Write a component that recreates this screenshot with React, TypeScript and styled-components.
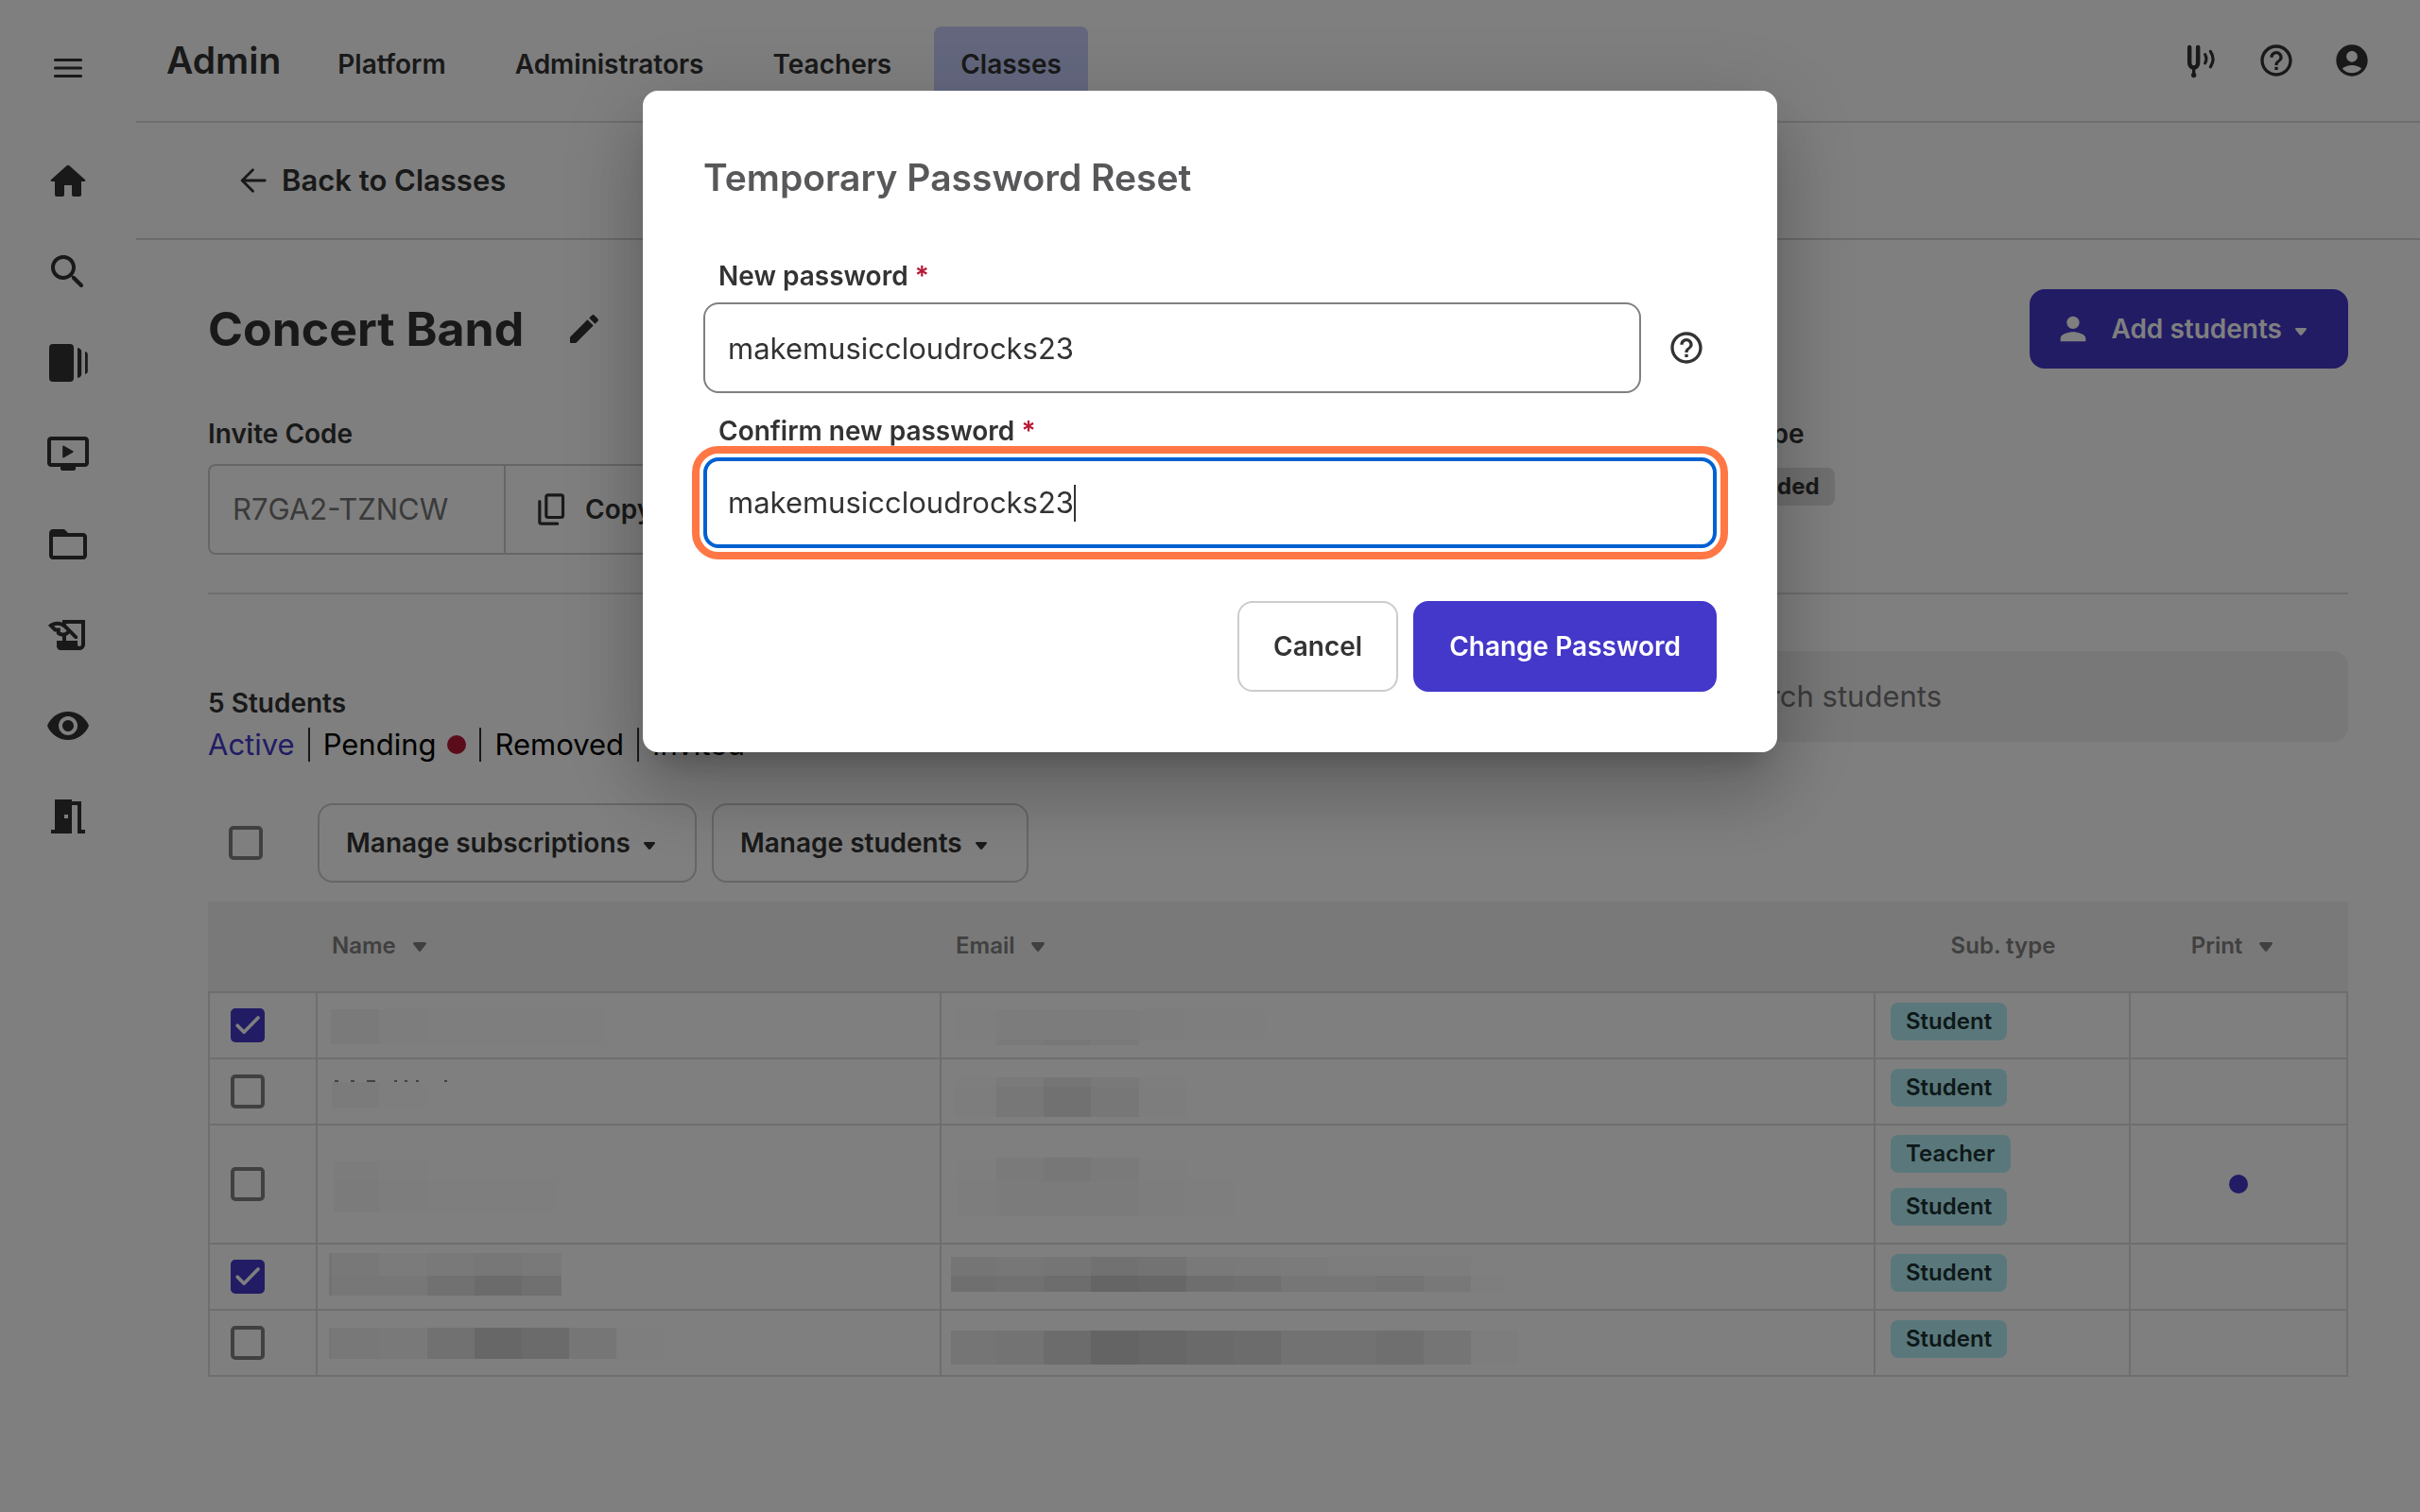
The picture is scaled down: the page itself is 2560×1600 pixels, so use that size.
import React, { useState } from "react";
import styled, { createGlobalStyle, css } from "styled-components";
import { MdFolderOpen, MdHelpOutline, MdHistoryEdu, MdMeetingRoom, MdPerson, MdVisibility } from "react-icons/md";

const color = {
  ink: "#333333",
  muted: "#808080",
  hint: "#757575",
  brand: "#4438ca",
  danger: "#b71836",
  line: "#dcdcdc",
  control: "#cccccc",
};

const text = {
  small: "24px",
  base: "28px",
  large: "31px",
  title: "39px",
  hero: "50px",
};

const GlobalStyle = createGlobalStyle`
  *, *::before, *::after { box-sizing: border-box; }
  body {
    margin: 0;
    background: #ffffff;
    color: ${color.ink};
    font-family: Inter, "Liberation Sans", sans-serif;
    font-size: ${text.base};
    line-height: 32px;
  }
  button, input { font: inherit; color: inherit; }
  button { cursor: pointer; }
  a { color: inherit; text-decoration: none; }
  h1, h2, p { margin: 0; }
`;

/* ---------- icons ---------- */

const Icon = styled.svg<{ $size?: number }>`
  display: block;
  flex: none;
  width: ${(p) => p.$size ?? 40}px;
  height: ${(p) => p.$size ?? 40}px;
  fill: currentColor;
`;

const line = { fill: "none", stroke: "currentColor", strokeLinecap: "round", strokeLinejoin: "round" } as const;

const MenuIcon = () => (
  <Icon viewBox="0 0 24 24">
    <path {...line} strokeWidth="1.9" d="M3.9 6.9h16.200M3.9 12h16.200M3.9 17.100h16.200" />
  </Icon>
);
const HomeIcon = () => (
  <Icon viewBox="0 0 24 24" $size={48}>
    <path d="M10 19v-5h4v5c0 .55.45 1 1 1h3c.55 0 1-.45 1-1v-7h1.7c.46 0 .68-.57.33-.87L12.67 3.6c-.38-.34-.96-.34-1.34 0l-8.36 7.53c-.34.3-.13.87.33.87H5v7c0 .55.45 1 1 1h3c.55 0 1-.45 1-1z" />
  </Icon>
);
const SearchIcon = ({ size = 48 }: { size?: number }) => (
  <Icon viewBox="0 0 24 24" $size={size}>
    <path d="M15.5 14h-.79l-.28-.27c1.2-1.4 1.82-3.31 1.48-5.34-.47-2.78-2.79-5-5.59-5.34-4.23-.52-7.79 3.04-7.27 7.27.34 2.8 2.56 5.12 5.34 5.59 2.03.34 3.94-.28 5.34-1.48l.27.28v.79l4.25 4.25c.41.41 1.08.41 1.49 0 .41-.41.41-1.08 0-1.49L15.5 14zm-6 0C7.01 14 5 11.99 5 9.5S7.01 5 9.5 5 14 7.01 14 9.5 11.99 14 9.5 14z" />
  </Icon>
);
const StackIcon = () => (
  <Icon viewBox="0 0 24 24" $size={48}>
    <rect x="2" y="2" width="13" height="20" rx="2" />
    <path d="M17 4c1.2.1 2.1 1 2.1 2v12c0 1-.9 1.9-2.1 2zM21 6c.9.2 1.4.8 1.4 1.5v9c0 .7-.5 1.3-1.4 1.5z" />
  </Icon>
);
const VideoIcon = () => (
  <Icon viewBox="0 0 24 24" $size={48}>
    <path d="M21 3H3c-1.1 0-2 .9-2 2v12c0 1.1.9 2 2 2h5v1c0 .55.45 1 1 1h6c.55 0 1-.45 1-1v-1h5c1.1 0 2-.9 2-2V5c0-1.1-.9-2-2-2zm0 14H3V5h18v12z" />
    <path {...line} fill="currentColor" strokeWidth="1" d="M9.6 8.3v5.4l4.7-2.7z" />
  </Icon>
);
const BackIcon = () => (
  <Icon viewBox="0 0 24 24">
    <path {...line} strokeWidth="1.7" d="M19.3 12H5M11.7 5.2L4.9 12l6.8 6.8" />
  </Icon>
);
const PencilIcon = () => (
  <Icon viewBox="0 0 24 24">
    <path d="M3 17.46v3.04c0 .28.22.5.5.5h3.04c.13 0 .26-.05.35-.15L17.81 9.94l-3.75-3.75L3.15 17.1c-.1.1-.15.22-.15.36zM20.71 7.04a.996.996 0 0 0 0-1.41l-2.34-2.34a.996.996 0 0 0-1.41 0l-1.83 1.83 3.75 3.75 1.83-1.83z" />
  </Icon>
);
const TuningForkIcon = () => (
  <Icon viewBox="0 0 24 24">
    <path {...line} strokeWidth="2.7" d="M4.9 3.6v9.600c0 2 1.100 3.300 2.700 3.300s2.700-1.300 2.700-3.300V3.600" />
    <path {...line} strokeWidth="2" d="M7.6 16.5v5" />
    <circle cx="7.6" cy="21.3" r="1.6" />
    <path {...line} strokeWidth="1.9" d="M14.8 8.2c1 1.8 1 3.700 0 5.500M18.200 6.200c2.100 3.200 2.100 6.700 0 9.900" />
  </Icon>
);
const AccountIcon = () => (
  <Icon viewBox="0 0 24 24">
    <path d="M12 2C6.48 2 2 6.48 2 12s4.48 10 10 10 10-4.48 10-10S17.52 2 12 2zm0 4c1.93 0 3.5 1.57 3.5 3.5S13.93 13 12 13s-3.5-1.57-3.5-3.5S10.07 6 12 6zm0 14c-2.03 0-4.43-.82-6.14-2.88C7.55 15.8 9.68 15 12 15s4.45.8 6.14 2.12C16.43 19.18 14.03 20 12 20z" />
  </Icon>
);
const CopyIcon = () => (
  <Icon viewBox="0 0 24 24">
    <rect {...line} strokeWidth="1.9" x="8.9" y="2.9" width="10.6" height="14.2" rx="1.2" />
    <path {...line} strokeWidth="1.9" d="M4.7 7v12.9c0 .7.5 1.2 1.2 1.2H16" />
  </Icon>
);

const CaretShape = styled.svg<{ $wide?: boolean }>`
  display: block;
  flex: none;
  width: ${(p) => (p.$wide ? 14 : 12)}px;
  height: ${(p) => (p.$wide ? 10 : 8)}px;
  margin-top: ${(p) => (p.$wide ? 2 : 6)}px;
  fill: currentColor;
`;
const Caret = ({ wide }: { wide?: boolean }) => (
  <CaretShape $wide={wide} viewBox="0 0 14 10" preserveAspectRatio="none" aria-hidden="true">
    <path d="M1.6 0h10.8c1.4 0 2 1.6 1.1 2.6L8.2 9.3c-.6.8-1.8.8-2.4 0L.5 2.6C-.4 1.6.2 0 1.6 0z" />
  </CaretShape>
);

/* ---------- shell ---------- */

const Shell = styled.div`
  display: flex;
  min-height: 100vh;
`;

const Sidebar = styled.nav`
  flex: none;
  width: 144px;
  padding-top: 48px;
  display: flex;
  flex-direction: column;
  align-items: center;
  gap: 48px;
`;

const IconButton = styled.button<{ $size?: number }>`
  flex: none;
  display: grid;
  place-items: center;
  width: ${(p) => p.$size ?? 48}px;
  height: ${(p) => p.$size ?? 48}px;
  padding: 0;
  border: 0;
  background: none;
`;

const MenuButton = styled(IconButton)`
  margin-bottom: 24px;
`;

const Main = styled.div`
  flex: 1;
  min-width: 0;
`;

const Header = styled.header`
  display: flex;
  align-items: baseline;
  gap: 32px;
  padding: 28px 52px 0 32px;
  border-bottom: 2px solid ${color.line};
`;

const Product = styled.h1`
  font-size: ${text.title};
  line-height: 48px;
  font-weight: 600;
`;

const Tabs = styled.nav`
  display: flex;
  gap: 17px;
`;

const Tab = styled.a<{ $active?: boolean }>`
  padding: 24px 28px 44px;
  border-radius: 8px 8px 0 0;
  font-weight: 600;
  background: ${(p) => (p.$active ? "#c8cffc" : "transparent")};
`;

const HeaderActions = styled.div`
  align-self: flex-start;
  display: flex;
  gap: 40px;
  margin-left: auto;
  padding-top: 16px;
`;

const BackBar = styled.div`
  display: flex;
  align-items: center;
  height: 124px;
  padding-left: 104px;
  border-bottom: 2px solid #d4d4d4;
`;

const BackLink = styled.a`
  display: flex;
  align-items: center;
  gap: 10px;
  font-size: ${text.large};
  line-height: 40px;
  font-weight: 600;
`;

const Content = styled.main`
  padding: 52px 76px;
`;

/* ---------- class details ---------- */

const TitleRow = styled.div`
  display: flex;
  align-items: center;
  gap: 44px;
`;

const ClassName = styled.h2`
  font-size: ${text.hero};
  line-height: 56px;
  font-weight: 700;
`;

const Button = styled.button<{ $primary?: boolean; $tall?: boolean }>`
  display: flex;
  align-items: center;
  gap: 14px;
  height: ${(p) => (p.$tall ? 96 : 84)}px;
  padding: ${(p) => (p.$tall ? "0 36px" : "0 42px 0 28px")};
  border: 2px solid ${(p) => (p.$primary ? color.brand : color.control)};
  border-radius: 16px;
  background: ${(p) => (p.$primary ? color.brand : "transparent")};
  color: ${(p) => (p.$primary ? "#ffffff" : color.ink)};
  font-weight: 600;
  white-space: nowrap;
`;

const AddButton = styled(Button)`
  margin-left: auto;
  padding-left: 24px;
`;

const AddLabel = styled.span`
  padding-left: 6px;
`;

const Details = styled.div`
  display: grid;
  grid-template-columns: minmax(0, 68fr) minmax(0, 32fr);
  margin-top: 53px;
  padding-bottom: 40px;
  border-bottom: 2px solid ${color.line};
`;

const Detail = styled.div`
  display: flex;
  flex-direction: column;
  align-items: flex-start;
  gap: 16px;
`;

const DetailLabel = styled.label`
  font-weight: 600;
`;

const CodeGroup = styled.div`
  display: flex;
  height: 96px;
  border: 2px solid ${color.control};
  border-radius: 8px;
`;

const CodeInput = styled.input`
  width: 313px;
  padding: 0 24px;
  border: 0;
  border-right: 2px solid ${color.control};
  background: none;
  color: ${color.hint};
  font-size: ${text.large};
`;

const CopyButton = styled.button`
  display: flex;
  align-items: center;
  gap: 16px;
  padding: 0 28px;
  border: 0;
  background: none;
  font-weight: 600;
`;

const Badge = styled.span<{ $tone?: "grey" }>`
  display: block;
  width: fit-content;
  padding: 4px 16px;
  border-radius: 8px;
  background: #b4f0f6;
  color: #1c3033;
  font-size: ${text.small};
  font-weight: 600;
  ${(p) =>
    p.$tone === "grey" &&
    css`
      margin-top: 4px;
      background: #e0e0e0;
      color: ${color.ink};
      font-weight: 700;
    `}
`;

/* ---------- students ---------- */

const ListHead = styled.div`
  display: flex;
  justify-content: space-between;
  margin-top: 60px;
`;

const Summary = styled.div`
  display: flex;
  flex-direction: column;
  gap: 8px;
  padding-top: 39px;
`;

const Count = styled.p`
  font-weight: 600;
`;

const Filters = styled.div`
  display: flex;
  align-items: center;
  font-size: ${text.large};
  line-height: 40px;
`;

const Filter = styled.a<{ $active?: boolean }>`
  display: flex;
  align-items: center;
  gap: 12px;
  padding: 0 14px;
  color: ${(p) => (p.$active ? color.brand : "#000000")};
  &:first-child {
    padding-left: 0;
  }
  & + & {
    border-left: 2px solid ${color.ink};
    line-height: 36px;
  }
`;

const Dot = styled.span<{ $danger?: boolean }>`
  display: block;
  width: 20px;
  height: 20px;
  border-radius: 50%;
  background: ${(p) => (p.$danger ? color.danger : color.brand)};
`;

const SearchBox = styled.label`
  display: flex;
  align-items: center;
  gap: 12px;
  width: 744px;
  height: 96px;
  padding: 0 24px;
  border-radius: 16px;
  background: #f0f0f0;
  color: ${color.hint};
`;

const SearchInput = styled.input`
  flex: 1;
  min-width: 0;
  padding: 0;
  border: 0;
  background: none;
  font-size: ${text.large};
  &::placeholder {
    color: ${color.hint};
    opacity: 1;
  }
`;

const Toolbar = styled.div`
  display: flex;
  align-items: center;
  gap: 16px;
  margin-top: 42px;
  padding-left: 22px;
`;

const CheckWrap = styled.span<{ $spaced?: boolean }>`
  display: grid;
  width: 36px;
  height: 36px;
  color: #ffffff;
  margin-right: ${(p) => (p.$spaced ? 42 : 0)}px;
  & > * {
    grid-area: 1 / 1;
  }
`;

const CheckBox = styled.input`
  appearance: none;
  width: 36px;
  height: 36px;
  margin: 0;
  border: 4px solid ${color.muted};
  border-radius: 5px;
  &:checked {
    border-color: ${color.brand};
    background: ${color.brand};
  }
  & + svg {
    visibility: hidden;
    pointer-events: none;
  }
  &:checked + svg {
    visibility: visible;
  }
`;

const Check = ({ label, initial = false, spaced }: { label: string; initial?: boolean; spaced?: boolean }) => {
  const [on, setOn] = useState(initial);
  return (
    <CheckWrap $spaced={spaced}>
      <CheckBox type="checkbox" aria-label={label} checked={on} onChange={() => setOn(!on)} />
      <Icon viewBox="0 0 36 36" $size={36} aria-hidden="true">
        <path {...line} strokeWidth="3.6" d="M7.2 18.2l6.9 7L29 10" />
      </Icon>
    </CheckWrap>
  );
};

const Table = styled.table`
  width: 100%;
  margin-top: 20px;
  table-layout: fixed;
  border-collapse: separate;
  border-spacing: 0;
`;

const HeadCell = styled.th<{ $width?: number; $center?: boolean }>`
  width: ${(p) => (p.$width ? `${p.$width}px` : "auto")};
  height: 97px;
  padding: 0 15px 2px;
  background: #f3f3f3;
  border-bottom: 2px solid ${color.line};
  color: ${color.muted};
  font-size: ${text.small};
  font-weight: 600;
  text-align: ${(p) => (p.$center ? "center" : "left")};
`;

const SortButton = styled.button`
  display: inline-flex;
  align-items: center;
  gap: 18px;
  padding: 0;
  border: 0;
  background: none;
  font-weight: 600;
`;

const CenterSort = styled(SortButton)`
  padding-right: 16px;
`;

const Cell = styled.td<{ $pad?: string; $top?: boolean }>`
  padding: ${(p) => p.$pad ?? "0"};
  border-right: 2px solid ${color.line};
  border-bottom: 2px solid ${color.line};
  vertical-align: ${(p) => (p.$top ? "top" : "middle")};
  &:first-child {
    border-left: 2px solid ${color.line};
  }
`;

const BadgeList = styled.div`
  display: flex;
  flex-direction: column;
  gap: 16px;
`;

const CenterDot = styled(Dot)`
  margin: 0 auto;
`;

const Mosaic = styled.svg`
  display: block;
  width: 100%;
  shape-rendering: crispEdges;
`;

/* One strip of a blurred-out value: top, height, left edge, then [right edge, darkness] pairs. */
type Strip = [number, number, number, [number, number][]];

const Redacted = ({ strips, height, ticks }: { strips: Strip[]; height: number; ticks?: [number, number][] }) => (
  <Mosaic height={height} aria-hidden="true">
    {strips.flatMap(([y, h, left, cells], s) =>
      cells.map(([right, shade], i) => {
        const x = i ? cells[i - 1][0] : left;
        return <rect key={`${s}-${i}`} x={x} y={y} width={right - x} height={h} fill="#000" fillOpacity={shade / 128} />;
      }),
    )}
    {ticks?.map(([x, w]) => <rect key={x} x={x} y={22} width={w} height={2} fill={color.ink} fillOpacity={0.6} />)}
  </Mosaic>
);

type Student = {
  checked?: boolean;
  name: Strip[];
  email: Strip[];
  ticks?: [number, number][];
  types: string[];
  print?: boolean;
};

const students: Student[] = [
  {
    checked: true,
    name: [[17, 37, 14, [[65, 5], [116, 2], [304, 1]]]],
    email: [
      [17, 32, 15, [[58, 1], [209, 3], [258, 2], [343, 1]]],
      [49, 6, 58, [[108, 5], [158, 8], [209, 5]]],
    ],
    types: ["Student"],
  },
  {
    name: [[24, 28, 15, [[65, 4], [116, 1]]]],
    ticks: [[18, 4], [35, 4], [52, 9], [81, 3], [92, 3], [104, 3], [134, 3]],
    email: [
      [19, 10, 13, [[58, 1], [108, 5], [158, 10], [209, 6], [259, 1]]],
      [29, 32, 13, [[58, 2], [108, 8], [158, 14], [209, 8], [259, 2]]],
    ],
    types: ["Student"],
  },
  {
    name: [
      [38, 20, 17, [[65, 3], [116, 1]]],
      [58, 33, 17, [[65, 4], [116, 2], [254, 1]]],
    ],
    email: [
      [34, 25, 17, [[58, 1], [108, 5], [158, 8], [209, 5], [259, 1]]],
      [59, 37, 17, [[58, 2], [209, 4], [258, 2], [309, 1]]],
    ],
    types: ["Teacher", "Student"],
    print: true,
  },
  {
    checked: true,
    name: [
      [9, 24, 12, [[15, 12], [65, 7], [116, 4], [166, 6], [216, 8], [258, 6]]],
      [33, 21, 12, [[15, 13], [116, 8], [166, 14], [216, 20], [258, 15]]],
    ],
    email: [
      [13, 20, 10, [[58, 10], [108, 8], [158, 10], [209, 14], [259, 12], [309, 6], [359, 5], [409, 4], [560, 2]]],
      [33, 17, 10, [[58, 16], [108, 14], [158, 18], [209, 26], [259, 24], [309, 17], [359, 15], [460, 9], [510, 11], [560, 7], [595, 1]]],
    ],
    types: ["Student"],
  },
  {
    name: [[18, 33, 12, [[15, 9], [65, 7], [116, 6], [166, 14], [216, 24], [266, 20], [316, 9], [366, 1]]]],
    email: [
      [21, 36, 10, [[58, 10], [108, 12], [158, 19], [209, 27], [259, 24], [309, 21], [359, 19], [460, 13], [510, 16], [560, 10], [610, 2]]],
    ],
    types: ["Student"],
  },
];

/* ---------- dialog ---------- */

const Scrim = styled.div`
  position: fixed;
  inset: 0;
  display: flex;
  justify-content: center;
  align-items: flex-start;
  padding: 96px 32px;
  background: rgba(0, 0, 0, 0.5);
`;

const Dialog = styled.form`
  display: flex;
  flex-direction: column;
  width: 100%;
  max-width: 1200px;
  padding: 64px;
  border-radius: 16px;
  background: #ffffff;
  box-shadow:
    0 22px 30px -14px rgba(0, 0, 0, 0.2),
    0 48px 76px 6px rgba(0, 0, 0, 0.14),
    0 18px 92px 16px rgba(0, 0, 0, 0.12);
`;

const DialogTitle = styled.h2`
  margin-bottom: 60px;
  color: #58585b;
  font-size: ${text.title};
  line-height: 56px;
  font-weight: 600;
`;

const Field = styled.div`
  display: flex;
  flex-direction: column;
  gap: 12px;
  margin-bottom: 24px;
`;

const FieldLabel = styled.label`
  padding-left: 16px;
  font-weight: 600;
`;

const Required = styled.span`
  color: ${color.danger};
`;

const FieldRow = styled.div`
  display: flex;
  align-items: center;
  gap: 16px;
`;

const inputFrame = css`
  flex: 1;
  min-width: 0;
  height: 96px;
  border-radius: 16px;
  background: #ffffff;
  font-size: ${text.large};
`;

const PasswordInput = styled.input`
  ${inputFrame}
  padding: 0 24px;
  border: 2px solid #808080;
`;

const FocusedFrame = styled.div`
  ${inputFrame}
  display: flex;
  align-items: center;
  padding: 0 22px;
  border: 4px solid #0060d2;
  outline: 8px solid #ff7744;
  outline-offset: 4px;
`;

const GrowingInput = styled.input`
  field-sizing: content;
  max-width: 100%;
  padding: 0;
  border: 0;
  outline: 0;
  background: none;
  caret-color: transparent;
`;

const TextCursor = styled.span`
  width: 2px;
  height: 39px;
  background: ${color.ink};
`;

const DialogActions = styled.div`
  display: flex;
  justify-content: flex-end;
  gap: 16px;
  margin-top: 32px;
`;

export default function App() {
  const [password, setPassword] = useState("makemusiccloudrocks23");
  const [confirm, setConfirm] = useState("makemusiccloudrocks23");

  return (
    <>
      <GlobalStyle />
      <Shell>
        <Sidebar aria-label="Main">
          <MenuButton type="button" aria-label="Menu"><MenuIcon /></MenuButton>
          <IconButton type="button" aria-label="Home"><HomeIcon /></IconButton>
          <IconButton type="button" aria-label="Search"><SearchIcon /></IconButton>
          <IconButton type="button" aria-label="Library"><StackIcon /></IconButton>
          <IconButton type="button" aria-label="Videos"><VideoIcon /></IconButton>
          <IconButton type="button" aria-label="Files"><MdFolderOpen size={48} /></IconButton>
          <IconButton type="button" aria-label="Compose"><MdHistoryEdu size={48} /></IconButton>
          <IconButton type="button" aria-label="Sight reading"><MdVisibility size={48} /></IconButton>
          <IconButton type="button" aria-label="Practice room"><MdMeetingRoom size={48} /></IconButton>
        </Sidebar>

        <Main>
          <Header>
            <Product>Admin</Product>
            <Tabs aria-label="Admin sections">
              <Tab href="#platform">Platform</Tab>
              <Tab href="#administrators">Administrators</Tab>
              <Tab href="#teachers">Teachers</Tab>
              <Tab href="#classes" $active>Classes</Tab>
            </Tabs>
            <HeaderActions>
              <IconButton type="button" $size={40} aria-label="Tuner"><TuningForkIcon /></IconButton>
              <IconButton type="button" $size={40} aria-label="Help"><MdHelpOutline size={40} /></IconButton>
              <IconButton type="button" $size={40} aria-label="Account"><AccountIcon /></IconButton>
            </HeaderActions>
          </Header>

          <BackBar>
            <BackLink href="#classes"><BackIcon />Back to Classes</BackLink>
          </BackBar>

          <Content>
            <TitleRow>
              <ClassName>Concert Band</ClassName>
              <IconButton type="button" $size={40} aria-label="Rename class"><PencilIcon /></IconButton>
              <AddButton type="button" $primary>
                <MdPerson size={40} />
                <AddLabel>Add students</AddLabel>
                <Caret />
              </AddButton>
            </TitleRow>

            <Details>
              <Detail>
                <DetailLabel htmlFor="invite">Invite Code</DetailLabel>
                <CodeGroup>
                  <CodeInput id="invite" readOnly value="R7GA2-TZNCW" />
                  <CopyButton type="button"><CopyIcon />Copy</CopyButton>
                </CodeGroup>
              </Detail>
              <Detail>
                <DetailLabel as="span">Class Type</DetailLabel>
                <Badge $tone="grey">Not included</Badge>
              </Detail>
            </Details>

            <ListHead>
              <Summary>
                <Count>5 Students</Count>
                <Filters>
                  <Filter href="#active" $active>Active</Filter>
                  <Filter href="#pending">Pending<Dot $danger /></Filter>
                  <Filter href="#removed">Removed</Filter>
                  <Filter href="#invited">Invited</Filter>
                </Filters>
              </Summary>
              <SearchBox>
                <SearchIcon size={40} />
                <SearchInput type="search" placeholder="Search students" aria-label="Search students" />
              </SearchBox>
            </ListHead>

            <Toolbar>
              <Check label="Select all students" spaced />
              <Button type="button">Manage subscriptions<Caret /></Button>
              <Button type="button">Manage students<Caret /></Button>
            </Toolbar>

            <Table>
              <thead>
                <tr>
                  <HeadCell $width={116} aria-label="Selected" />
                  <HeadCell $width={660}><SortButton type="button">Name<Caret wide /></SortButton></HeadCell>
                  <HeadCell><SortButton type="button">Email<Caret wide /></SortButton></HeadCell>
                  <HeadCell $width={270} $center>Sub. type</HeadCell>
                  <HeadCell $width={230} $center><CenterSort type="button">Print<Caret wide /></CenterSort></HeadCell>
                </tr>
              </thead>
              <tbody>
                {students.map((s, i) => {
                  const height = s.types.length > 1 ? 124 : 68;
                  return (
                    <tr key={i}>
                      <Cell $pad="0 22px"><Check label={`Select student ${i + 1}`} initial={s.checked} /></Cell>
                      <Cell $top><Redacted strips={s.name} height={height} ticks={s.ticks} /></Cell>
                      <Cell $top><Redacted strips={s.email} height={height} /></Cell>
                      <Cell $top $pad="10px 16px 18px">
                        <BadgeList>{s.types.map((t) => <Badge key={t}>{t}</Badge>)}</BadgeList>
                      </Cell>
                      <Cell>{s.print && <CenterDot />}</Cell>
                    </tr>
                  );
                })}
              </tbody>
            </Table>
          </Content>
        </Main>
      </Shell>

      <Scrim>
        <Dialog role="dialog" aria-modal="true" aria-labelledby="reset-title" onSubmit={(e) => e.preventDefault()}>
          <DialogTitle id="reset-title">Temporary Password Reset</DialogTitle>
          <Field>
            <FieldLabel htmlFor="new-password">New password <Required>*</Required></FieldLabel>
            <FieldRow>
              <PasswordInput id="new-password" required value={password} onChange={(e) => setPassword(e.target.value)} />
              <IconButton type="button" $size={64} aria-label="Password rules"><MdHelpOutline size={40} /></IconButton>
            </FieldRow>
          </Field>
          <Field>
            <FieldLabel htmlFor="confirm-password">Confirm new password <Required>*</Required></FieldLabel>
            <FieldRow>
              <FocusedFrame>
                <GrowingInput id="confirm-password" required value={confirm} onChange={(e) => setConfirm(e.target.value)} />
                <TextCursor />
              </FocusedFrame>
            </FieldRow>
          </Field>
          <DialogActions>
            <Button type="button" $tall>Cancel</Button>
            <Button type="submit" $tall $primary>Change Password</Button>
          </DialogActions>
        </Dialog>
      </Scrim>
    </>
  );
}
